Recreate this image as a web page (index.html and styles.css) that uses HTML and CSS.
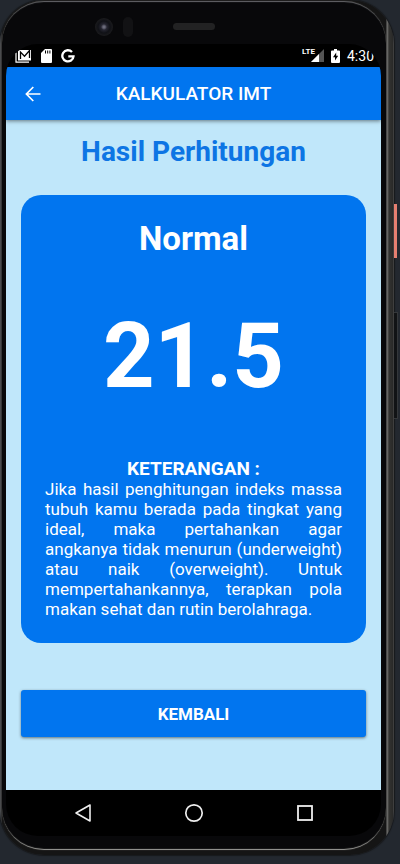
FILE: index.html
```html
<!DOCTYPE html>
<html lang="id">
<head>
<meta charset="utf-8">
<meta name="viewport" content="width=device-width, initial-scale=1">
<title>Kalkulator IMT</title>
<link rel="stylesheet" href="styles.css">
</head>
<body>
<div class="device">
  <span class="side-key power"></span>
  <span class="side-key volume"></span>
  <div class="frame">
    <div class="bezel-top">
      <span class="camera"></span>
      <span class="sensor"></span>
      <span class="speaker"></span>
    </div>
    <div class="screen">
      <div class="status-bar">
        <div class="status-group notices">
          <svg width="17" height="14" viewBox="0 0 17 14">
            <path d="M1 3.500v9.700h13" fill="none" stroke="#fff" stroke-width="1.200"/>
            <path d="M3 1h13v10.500H3z" fill="#fff"/>
            <path d="M5.500 10V3l4 4.200L14.500 1.500V9" fill="none" stroke="#000" stroke-width="1.300"/>
          </svg>
          <svg width="11" height="14" viewBox="0 0 11 14">
            <path d="M4 0h6a1 1 0 0 1 1 1v12a1 1 0 0 1-1 1H1a1 1 0 0 1-1-1V4z" fill="#fff"/>
            <path d="M4.500 1.500v3M6.700 1.500v3M8.900 1.500v3" stroke="#000" stroke-width="1"/>
          </svg>
          <svg width="14" height="14" viewBox="0 0 14 14">
            <path d="M11 3A5.600 5.600 0 1 0 12.500 7.300H7.300" fill="none" stroke="#fff" stroke-width="2.300"/>
          </svg>
        </div>
        <div class="status-group">
          <span class="network">LTE</span>
          <svg class="signal" width="13" height="13" viewBox="0 0 13 13">
            <path d="M13 0v13H0z" fill="#555"/>
            <path d="M8 5v8H0z" fill="#fff"/>
          </svg>
          <svg width="9" height="14" viewBox="0 0 9 14">
            <path d="M3 0h3v1.500h2a1 1 0 0 1 1 1V13a1 1 0 0 1-1 1H1a1 1 0 0 1-1-1V2.500a1 1 0 0 1 1-1h2z" fill="#fff"/>
            <path d="M5.200 3.500 2 8.300h2v3.200l3.200-4.800h-2z" fill="#000"/>
          </svg>
          <time class="clock">4:30</time>
        </div>
      </div>
      <header class="app-bar">
        <button class="back" type="button" aria-label="Kembali ke layar sebelumnya">
          <svg width="16" height="16" viewBox="0 0 16 16" fill="none" stroke="currentColor" stroke-width="1.700">
            <path d="M15.500 8H1.500M8.300 1 1.400 8l6.900 7"/>
          </svg>
        </button>
        <h1 class="app-title">KALKULATOR IMT</h1>
      </header>
      <main class="content">
        <h2 class="heading">Hasil Perhitungan</h2>
        <section class="card">
          <p class="category">Normal</p>
          <p class="score">21.5</p>
          <h3 class="note-title">KETERANGAN :</h3>
          <p class="note">Jika hasil penghitungan indeks massa tubuh kamu berada pada tingkat yang ideal, maka pertahankan agar angkanya tidak menurun (underweight) atau naik (overweight). Untuk mempertahankannya, terapkan pola makan sehat dan rutin berolahraga.</p>
        </section>
        <button class="action" type="button">KEMBALI</button>
      </main>
      <nav class="nav-bar" aria-label="Navigasi sistem">
        <button type="button" aria-label="Kembali">
          <svg width="20" height="20" viewBox="0 0 20 20"><path d="M17 2v16L3 10z" fill="none" stroke="#eee" stroke-width="1.600" stroke-linejoin="round"/></svg>
        </button>
        <button type="button" aria-label="Beranda">
          <svg width="20" height="20" viewBox="0 0 20 20"><circle cx="10" cy="10" r="8.200" fill="none" stroke="#eee" stroke-width="1.700"/></svg>
        </button>
        <button type="button" aria-label="Aplikasi terbaru">
          <svg width="20" height="20" viewBox="0 0 20 20"><rect x="3" y="3" width="14" height="14" fill="none" stroke="#eee" stroke-width="1.800"/></svg>
        </button>
      </nav>
    </div>
  </div>
</div>
</body>
</html>
```
FILE: styles.css
```css
* {
  box-sizing: border-box;
}

body {
  margin: 0;
  min-height: 100vh;
  padding: 0 6px 8px 0;
  background: #23282f;
  color: #fff;
  font-family: Roboto, "Noto Sans", sans-serif;
  overflow-x: hidden;
}

h1, h2, h3, p {
  margin: 0;
}

button {
  padding: 0;
  border: 0;
  background: none;
  color: inherit;
  font: inherit;
}

svg {
  display: block;
}

.device {
  position: relative;
  padding: 1px 8px 5px 2px;
  border-radius: 44px;
  background: linear-gradient(to right, #4a4b4d 0, #4a4b4d 1px, #151515 2px, #151515 calc(100% - 8px), #777775 calc(100% - 7px), #333331 calc(100% - 5px), #292928 calc(100% - 1px), #555 100%);
  box-shadow: 0 0 1px 1px #17191c;
}

.side-key {
  position: absolute;
  left: 100%;
}

.power {
  top: 204px;
  width: 3px;
  height: 54px;
  background: #e57f70;
}

.volume {
  top: 312px;
  width: 4px;
  height: 107px;
  border: 1px solid #34373a;
  border-left: 0;
  background: #111315;
}

.frame {
  padding: 0 5px 14px 4px;
  border-radius: 42px;
  background: #08080a;
  box-shadow: inset 0 2px 1px -1px #66676a, inset 0 -2px 1px -1px #a0a09c, 0 0 1px #777570;
}

.bezel-top {
  position: relative;
  height: 43px;
}

.camera,
.sensor,
.speaker {
  position: absolute;
  left: 50%;
}

.camera {
  top: 17px;
  width: 18px;
  height: 18px;
  margin-left: -99px;
  border-radius: 50%;
  background: radial-gradient(circle, #6b6b7b 0 1px, #252530 3px, #101116 6px, #1b1b1d 9px);
}

.sensor {
  top: 16px;
  width: 10px;
  height: 20px;
  margin-left: -71px;
  border-radius: 5px;
  background: #121214;
}

.speaker {
  top: 22px;
  width: 42px;
  height: 7px;
  margin-left: -21px;
  border-radius: 4px;
  background: #222223;
}

.screen {
  overflow: hidden;
  border-radius: 32px;
  background: #000;
}

.status-bar {
  display: flex;
  align-items: center;
  justify-content: space-between;
  height: 23px;
  padding: 0 7px 0 9px;
}

.status-group {
  display: flex;
  align-items: center;
  gap: 7px;
}

.notices {
  gap: 9px;
}

.network {
  align-self: flex-start;
  font-family: "Liberation Sans Narrow", Roboto, sans-serif;
  font-size: 8px;
  font-weight: 700;
  line-height: 8px;
}

.signal {
  margin-left: -11px;
}

.clock {
  font-size: 14px;
  line-height: 16px;
}

.app-bar {
  position: relative;
  display: grid;
  grid-template-columns: 54px 1fr 54px;
  align-items: center;
  height: 53px;
  background: #0175ef;
  box-shadow: 0 1px 4px rgba(0, 0, 0, 0.5);
}

.back {
  display: flex;
  align-items: center;
  justify-content: center;
  height: 48px;
}

.app-title {
  font-size: 19px;
  font-weight: 500;
  line-height: 24px;
  text-align: center;
}

.content {
  padding: 15px 15px 53px;
  background: #c0e7fa;
}

.heading {
  margin-bottom: 26px;
  color: #0d75e4;
  font-size: 28px;
  font-weight: 700;
  line-height: 34px;
  text-align: center;
}

.card {
  padding: 24px;
  border-radius: 20px;
  background: #0175ef;
}

.category {
  font-size: 33px;
  font-weight: 700;
  line-height: 40px;
  text-align: center;
}

.score {
  margin: 42px 0 46px;
  font-size: 90px;
  font-weight: 700;
  line-height: 112px;
  text-align: center;
}

.note-title {
  font-size: 19px;
  font-weight: 700;
  line-height: 20px;
  text-align: center;
}

.note {
  font-size: 17px;
  line-height: 20px;
  text-align: justify;
}

.action {
  display: block;
  width: 100%;
  height: 47px;
  margin-top: 47px;
  border-radius: 3px;
  background: #0175ef;
  box-shadow: 0 1px 3px rgba(0, 0, 0, 0.5);
  font-size: 17px;
  font-weight: 700;
  line-height: 20px;
}

.nav-bar {
  display: grid;
  grid-template-columns: repeat(3, 1fr);
  height: 46px;
  padding: 0 21px;
}

.nav-bar button {
  display: flex;
  align-items: center;
  justify-content: center;
}
```
